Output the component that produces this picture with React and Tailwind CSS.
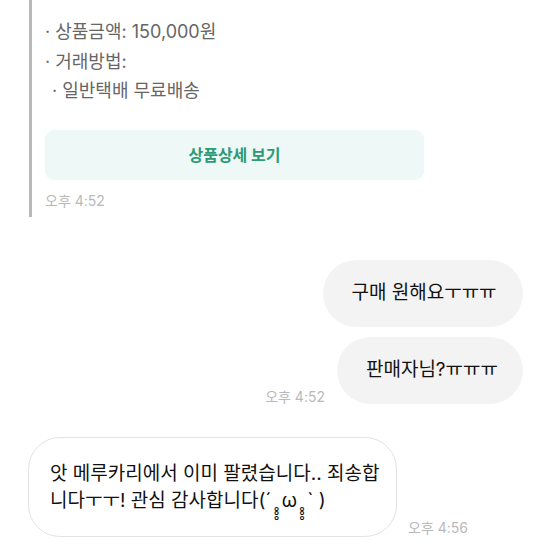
import React from "react";

const font = { fontFamily: 'Inter, "Noto Sans CJK KR", "Noto Sans", sans-serif' };

export default function App() {
  return (
    <div className="w-[554px] h-[554px] bg-white overflow-hidden flex flex-col" style={font}>
      {/* Top card */}
      <div className="ml-[29px] border-l-[3px] border-[#b8b8b8] pl-[13px] pt-[17px] pb-[7px] flex flex-col">
        <div className="text-[18px] leading-[29.5px] text-[#666666]">
          <div>· 상품금액: 150,000원</div>
          <div>· 거래방법:</div>
          <div className="pl-[7px]">· 일반택배 무료배송</div>
        </div>
        <div className="mt-[24px] w-[379px] h-[50px] rounded-[9px] bg-[#eef8f6] flex items-center justify-center">
          <span className="text-[16px] font-bold text-[#2d9a78]">상품상세 보기</span>
        </div>
        <div className="mt-[12px] text-[14px] leading-[18px] text-[#b9b9b9]">오후 4:52</div>
      </div>

      {/* Outgoing */}
      <div className="mt-[43px] pr-[31px] flex flex-col items-end gap-[10px]">
        <div className="h-[67px] w-[200px] rounded-full bg-[#f3f3f3] pl-[2px] flex items-center justify-center text-[19px] text-[#111111] whitespace-nowrap">
          구매 원해요ㅜㅠㅠ
        </div>
        <div className="flex items-end gap-[12px]">
          <div className="text-[14px] leading-[12px] text-[#b9b9b9] mb-[1px]">오후 4:52</div>
          <div className="h-[67px] w-[186px] rounded-full bg-[#f3f3f3] pl-[4px] flex items-center justify-center text-[19px] text-[#111111] whitespace-nowrap">
            판매자님?ㅠㅠㅠ
          </div>
        </div>
      </div>

      {/* Incoming */}
      <div className="mt-[33px] pl-[28px] flex items-end gap-[11px]">
        <div className="h-[100px] w-[369px] rounded-[32px] border border-[#e3e3e3] bg-white pl-[21px] pr-[6px] flex flex-col justify-center text-[19px] leading-[27px] text-[#111111]">
          <div className="whitespace-nowrap">앗 메루카리에서 이미 팔렸습니다.. 죄송합</div>
          <div className="whitespace-nowrap">니다ㅜㅜ! 관심 감사합니다(´ ̥̥̥ ω ̥̥̥ ` )</div>
        </div>
        <div className="text-[14px] leading-[18px] text-[#b9b9b9]">오후 4:56</div>
      </div>
    </div>
  );
}
